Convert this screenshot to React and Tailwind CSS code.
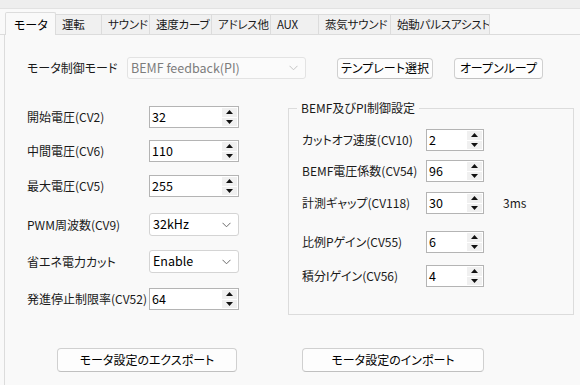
import React from 'react';

const tabs = [
  { label: 'モータ', w: 51, active: true },
  { label: '運転', w: 46 },
  { label: 'サウンド', w: 48 },
  { label: '速度カーブ', w: 62 },
  { label: 'アドレス他', w: 59 },
  { label: 'AUX', w: 48 },
  { label: '蒸気サウンド', w: 72 },
  { label: '始動パルスアシスト', w: 99 },
];

function Chevron({ color = '#6b6b6b' }) {
  return (
    <svg width="9" height="6" viewBox="0 0 9 6" className="shrink-0">
      <polyline points="0.5,0.8 4.5,4.8 8.5,0.8" fill="none" stroke={color} strokeWidth="1" />
    </svg>
  );
}

function SpinBox({ value, w = 'w-[90px]' }) {
  return (
    <div className={`${w} h-[22px] flex border border-[#b4b4b4] bg-white`}>
      <div className="flex-1 pl-[2px] flex items-center text-[12.5px] text-black">{value}</div>
      <div className="w-[16px] flex flex-col gap-[1px] py-[1px] pr-[1px]">
        <div className="flex-1 bg-[#f0f0f0] flex items-center justify-center">
          <svg width="7" height="4" viewBox="0 0 7 4"><polygon points="0,4 7,4 3.5,0" fill="#111" /></svg>
        </div>
        <div className="flex-1 bg-[#f0f0f0] flex items-center justify-center">
          <svg width="7" height="4" viewBox="0 0 7 4"><polygon points="0,0 7,0 3.5,4" fill="#111" /></svg>
        </div>
      </div>
    </div>
  );
}

function Combo({ value }) {
  return (
    <div className="w-[90px] h-[23px] flex items-center justify-between border border-[#d4d4d4] rounded-[3px] bg-white pl-[3px] pr-[7px] text-[12.5px] text-black">
      <span>{value}</span>
      <Chevron />
    </div>
  );
}

function Btn({ children, w, h = 'h-[21px]' }) {
  return (
    <button className={`${w} ${h} flex items-center justify-center border border-[#d0d0d0] border-b-[#c0c0c0] rounded-[4px] bg-[#fdfdfd] text-[12px] text-black whitespace-nowrap`}>
      {children}
    </button>
  );
}

function Row({ label, children, mt, lw = 'w-[122px]' }) {
  return (
    <div className={`flex items-center ${mt}`}>
      <div className={`${lw} shrink-0 text-[12px] text-[#1a1a1a] whitespace-nowrap`}>{label}</div>
      {children}
    </div>
  );
}

export default function App() {
  return (
    <div className="w-[580px] h-[385px] overflow-hidden flex flex-col bg-[#f9f9f9] font-['Noto_Sans_CJK_JP',sans-serif] [font-feature-settings:'palt']">
      <div className="h-[9px] shrink-0 bg-[#eeeeee] border-b border-[#e2e2e2]" />
      <div className="h-[26px] shrink-0 flex items-end pl-[5px] border-b border-[#dcdcdc]">
        {tabs.map(t => (
          <div
            key={t.label}
            style={{ width: t.w }}
            className={
              t.active
                ? 'h-[23px] -mb-px bg-[#f9f9f9] border border-b-0 border-[#dcdcdc] rounded-t-[2px] pl-[8px] pt-[3px] text-[12px] text-black whitespace-nowrap'
                : 'h-[20px] bg-[#f0f0f0] border border-b-0 border-l-0 border-[#dcdcdc] flex items-center pl-[6px] text-[11.5px] tracking-[-0.2px] text-[#1a1a1a] whitespace-nowrap overflow-hidden'
            }
          >
            {t.label}
          </div>
        ))}
      </div>

      <div className="flex-1 ml-[4px] border-l border-[#dcdcdc] pl-[22px]">
        <div className="mt-[22px] flex items-center">
          <div className="w-[100px] text-[12px] text-[#1a1a1a] whitespace-nowrap">モータ制御モード</div>
          <div className="w-[179px] h-[22px] flex items-center justify-between border border-[#e3e3e3] rounded-[3px] bg-[#fbfbfb] pl-[3px] pr-[7px] text-[12.5px] text-[#7d7d7d]">
            <span>BEMF feedback(PI)</span>
            <Chevron color="#c4c4c4" />
          </div>
          <div className="ml-[31px]"><Btn w="w-[96px]">テンプレート選択</Btn></div>
          <div className="ml-[21px]"><Btn w="w-[89px]">オープンループ</Btn></div>
        </div>

        <div className="mt-[21px] flex items-start">
          <div className="w-[212px] pt-[6px]">
            <Row label="開始電圧(CV2)"><SpinBox value="32" /></Row>
            <Row label="中間電圧(CV6)" mt="mt-[12px]"><SpinBox value="110" /></Row>
            <Row label="最大電圧(CV5)" mt="mt-[13px]"><SpinBox value="255" /></Row>
            <Row label="PWM周波数(CV9)" mt="mt-[16px]"><Combo value="32kHz" /></Row>
            <Row label="省エネ電力カット" mt="mt-[14px]"><Combo value="Enable" /></Row>
            <Row label="発進停止制限率(CV52)" mt="mt-[15px]"><SpinBox value="64" /></Row>
          </div>

          <fieldset className="ml-[49px] w-[286px] border border-[#dcdcdc] pl-[13px] pb-[27px]">
            <legend className="ml-[-5px] px-[4px] text-[12px] leading-[16px] text-[#1a1a1a]">BEMF及びPI制御設定</legend>
            <Row label="カットオフ速度(CV10)" lw="w-[124px]" mt="mt-[13px]"><SpinBox value="2" w="w-[58px]" /></Row>
            <Row label="BEMF電圧係数(CV54)" lw="w-[124px]" mt="mt-[9px]"><SpinBox value="96" w="w-[58px]" /></Row>
            <Row label="計測ギャップ(CV118)" lw="w-[124px]" mt="mt-[10px]">
              <SpinBox value="30" w="w-[58px]" />
              <span className="ml-[19px] text-[12px] text-[#1a1a1a]">3ms</span>
            </Row>
            <Row label="比例Pゲイン(CV55)" lw="w-[124px]" mt="mt-[17px]"><SpinBox value="6" w="w-[58px]" /></Row>
            <Row label="積分Iゲイン(CV56)" lw="w-[124px]" mt="mt-[12px]"><SpinBox value="4" w="w-[58px]" /></Row>
          </fieldset>
        </div>

        <div className="mt-[33px] flex items-center">
          <div className="ml-[30px]"><Btn w="w-[180px]" h="h-[24px]">モータ設定のエクスポート</Btn></div>
          <div className="ml-[65px]"><Btn w="w-[182px]" h="h-[24px]">モータ設定のインポート</Btn></div>
        </div>
      </div>
    </div>
  );
}
